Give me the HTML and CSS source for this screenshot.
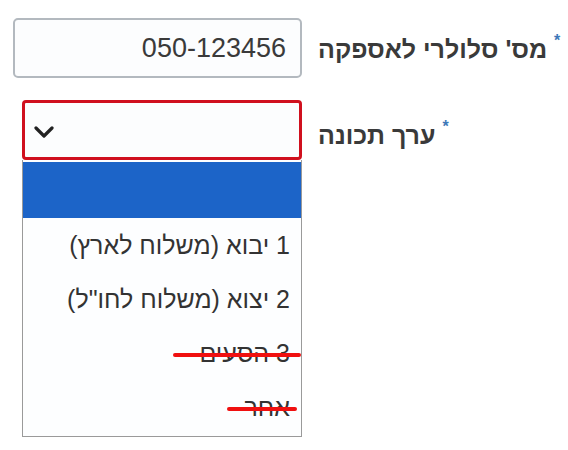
FILE: index.html
```html
<!DOCTYPE html>
<html lang="he">
<head>
<meta charset="utf-8">
<link rel="stylesheet" href="styles.css">
</head>
<body>
<div class="form">
  <div class="row row-phone">
    <div class="field input-box">050-123456</div>
    <div class="label" dir="rtl"><span class="req">*</span> מס' סלולרי לאספקה</div>
  </div>
  <div class="row row-select">
    <div class="field select-wrap">
      <div class="select-box">
        <svg class="chev" width="20" height="12" viewBox="0 0 20 12"><polyline points="2,2 10,10 18,2" fill="none" stroke="#222" stroke-width="3.2" stroke-linecap="round" stroke-linejoin="round"/></svg>
      </div>
      <div class="dropdown" dir="rtl">
        <div class="opt selected"></div>
        <div class="opt">1 יבוא (משלוח לארץ)</div>
        <div class="opt">2 יצוא (משלוח לחו"ל)</div>
        <div class="opt struck s1">3 הסעים</div>
        <div class="opt struck s2">אחר</div>
      </div>
    </div>
    <div class="label label2" dir="rtl"><span class="req">*</span> ערך תכונה</div>
  </div>
</div>
</body>
</html>
```
FILE: styles.css
```css
html, body {
  margin: 0;
  padding: 0;
  background: #ffffff;
}
body {
  width: 568px;
  height: 450px;
  overflow: hidden;
  font-family: "Liberation Sans", Arial, sans-serif;
  color: #333333;
}
.form {
  display: flex;
  flex-direction: column;
  padding-top: 18px;
  gap: 22px;
}
.row {
  display: flex;
  align-items: center;
}
.row-phone {
  padding-left: 13px;
}
.row-select {
  padding-left: 22px;
}
.field {
  flex: none;
}
.input-box {
  box-sizing: content-box;
  width: 271px;
  height: 56px;
  padding-right: 14px;
  border: 2px solid #b3b9bf;
  border-radius: 5px;
  background: #fcfdfe;
  font-size: 27px;
  color: #3a3a3a;
  display: flex;
  justify-content: flex-end;
  align-items: center;
}
.label {
  margin-left: 16px;
  font-size: 25px;
  font-weight: bold;
  color: #3a3a3a;
  white-space: nowrap;
}
.label2 {
  margin-top: 8px;
}
.req {
  color: #3d78b8;
  font-size: 16px;
  vertical-align: 12px;
}
.select-wrap {
  position: relative;
  width: 280px;
}
.select-box {
  height: 54px;
  border: 3px solid #d0101e;
  border-radius: 4px;
  background: #fcfdfe;
  display: flex;
  align-items: center;
  padding-left: 9px;
}
.chev {
  display: block;
  margin-top: 4px;
}
.dropdown {
  position: absolute;
  left: 0;
  top: 60px;
  width: 278px;
  border: 1px solid #9a9a9a;
  border-top: none;
  background: #fdfeff;
  padding-bottom: 2px;
  z-index: 2;
}
.opt {
  height: 54px;
  line-height: 54px;
  font-size: 25px;
  color: #333333;
  padding-right: 11px;
  position: relative;
  white-space: nowrap;
}
.opt.selected {
  height: 56px;
  background: #1c64c8;
  margin-top: 2px;
}
.struck::after {
  content: "";
  position: absolute;
  height: 4px;
  background: #f01010;
  border-radius: 2px;
  top: 27px;
}
.s1::after {
  left: 150px;
  width: 128px;
}
.s2::after {
  left: 204px;
  width: 70px;
}
```
